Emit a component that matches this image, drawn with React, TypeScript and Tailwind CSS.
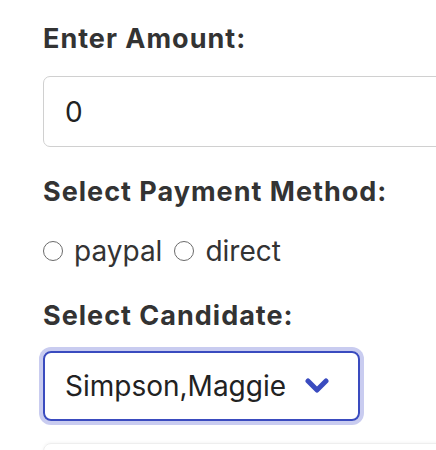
import { useState } from "react";

const methods = ["paypal", "direct"];

export default function App() {
  const [amount, setAmount] = useState("0");
  const [method, setMethod] = useState("");
  const [candidate, setCandidate] = useState("Simpson,Maggie");

  return (
    <div className="w-[436px] h-[450px] overflow-hidden bg-white font-['Inter',sans-serif] text-[#333]">
      <div className="pl-[43px] pt-[23px] w-[520px]">
        {/* amount */}
        <label className="block text-[27px] leading-[32px] font-bold tracking-[1px]">Enter Amount:</label>
        <input
          value={amount}
          onChange={(e) => setAmount(e.target.value)}
          className="mt-[21px] block w-[460px] h-[71px] rounded-[7px] border border-[#d0d0d0] px-[21px] text-[28px] text-[#222] outline-none"
        />

        {/* payment method */}
        <label className="mt-[29px] block text-[27px] leading-[32px] font-bold tracking-[1px]">Select Payment Method:</label>
        <div className="mt-[27px] flex items-center text-[28px] leading-[32px] text-[#333]">
          {methods.map((m) => (
            <label key={m} className="flex items-center mr-[12px] cursor-pointer">
              <span
                onClick={() => setMethod(m)}
                className="shrink-0 w-[20px] h-[20px] rounded-full border-[1.5px] border-[#6b6b6b] mr-[11px] flex items-center justify-center"
              >
                {method === m && <span className="w-[9px] h-[9px] rounded-full bg-[#3a4bbf]" />}
              </span>
              {m}
            </label>
          ))}
        </div>

        {/* candidate */}
        <label className="mt-[33px] block text-[27px] leading-[32px] font-bold tracking-[1px]">Select Candidate:</label>
        <div className="mt-[19px] relative w-[317px] h-[70px] rounded-[8px] border-2 border-[#3a4bbf] ring-4 ring-[#c9ccf0] flex items-center pl-[20px] pr-[29px]">
          <select
            value={candidate}
            onChange={(e) => setCandidate(e.target.value)}
            className="appearance-none bg-transparent flex-1 text-[28px] text-[#222] outline-none"
          >
            <option>Simpson,Maggie</option>
            <option>Simpson,Lisa</option>
            <option>Simpson,Bart</option>
          </select>
          <svg width="24" height="16" viewBox="0 0 24 16" className="pointer-events-none">
            <path d="M3 3l9 9 9-9" fill="none" stroke="#3a4bbf" strokeWidth="5" strokeLinecap="round" strokeLinejoin="round" />
          </svg>
        </div>

        <div className="mt-[22px] h-[60px] w-[460px] rounded-[8px] border border-[#eeeeee] shadow-[0_-1px_3px_rgba(0,0,0,0.04)]" />
      </div>
    </div>
  );
}
